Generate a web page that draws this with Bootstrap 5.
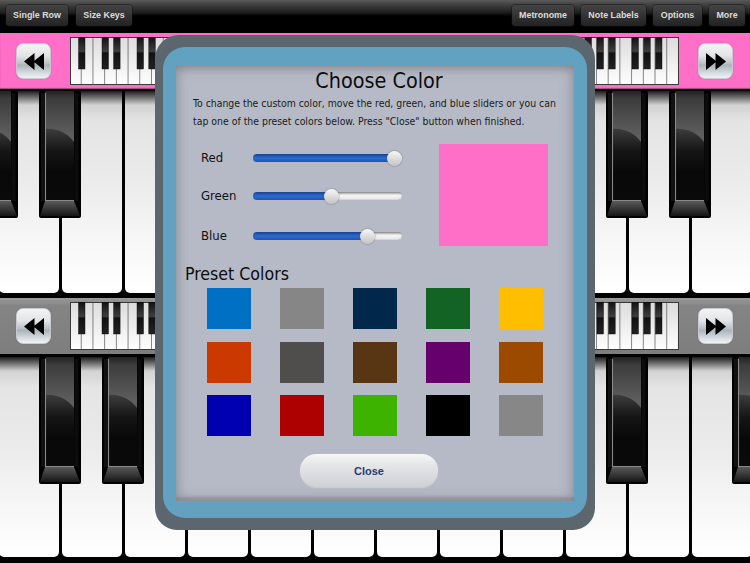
<!DOCTYPE html>
<html lang="en">
<head>
<meta charset="utf-8">
<title>Choose Color</title>
<link href="https://cdn.jsdelivr.net/npm/bootstrap@5.3.0/dist/css/bootstrap.min.css" rel="stylesheet">
<style>
html,body{margin:0;background:#000;}
.stage{width:750px;height:563px;overflow:hidden;background:#000;}
.topbar{height:31px;margin-bottom:2px;padding:0 5px 0 6px;background:linear-gradient(#5a5a5a 0,#3a3a3a 6px,#1c1c1c 13px,#000 16px,#000 100%);}
.tbar-r{gap:7px;}
.tbar-l{gap:8px;}
.tbtn{height:21px;padding:0;border:0;border-radius:3px;font:700 8.9px/21px "Liberation Sans",sans-serif;color:#dcdcdc;background:linear-gradient(#444 0,#333 50%,#222 100%);box-shadow:0 0 0 .5px #111;white-space:nowrap;}
.tbtn:hover{color:#dcdcdc;background:#333;}
.w-a{width:62px}.w-b{width:56px}.w-c{width:62px}.w-d{width:65px}.w-e{width:49px}.w-f{width:36px}
.band{height:56px;padding:0 18px 0 16px;gap:19px;}
.band-pink{background:#ff6ec7;margin-bottom:2px;box-shadow:inset 0 -1px 1px #a04a80;}
.band-grey{background:linear-gradient(#9a9a9a 0,#848484 8px,#7e7e7e 100%);margin-bottom:3px;}
.glass{width:35px;height:36px;flex:none;border-radius:7px;padding:0;border:1px solid #c9c9d2;background:linear-gradient(#f4f4f4 0,#e2e4e6 35%,#b8c0c6 58%,#a9b3ba 62%,#d5dbdf 85%,#f1f3f4 100%);box-shadow:0 0 1px rgba(0,0,0,.3);}
.glass svg{display:block;margin:auto;}
.mini{display:block;flex:none;}
.keys{margin-left:-64.5px;gap:3px;width:900px;}
.k-top{height:202px;margin-bottom:5px;}
.k-bot{height:200px;margin-bottom:6px;}
.wkey{position:relative;width:60px;flex:none;border-radius:0 0 5px 5px;background:linear-gradient(#1e1e1e 0,#777 7px,#d2d2d2 14px,#e4e4e4 30px,#ebebeb 90px,#f5f5f5 140px,#fff 100%);}
.bkey{position:absolute;top:0;left:calc(100% - 19.5px);width:42px;height:127px;display:block;z-index:1;}
.shell{position:absolute;left:155px;top:35px;width:440px;height:495px;padding:12px 8px;background:#5c666f;border-radius:24px 24px 22px 22px;z-index:5;}
.tray{height:100%;padding:18px 13px;background:#62a1c0;border-radius:22px;}
.sheet{height:100%;background:#b6bac6;box-shadow:inset 0 0 13px rgba(110,110,120,.7),inset 0 6px 7px -5px rgba(110,110,110,.4),inset 0 -10px 2px -6px rgba(140,140,140,.5);color:#111;font-family:"DejaVu Sans Condensed","DejaVu Sans",sans-serif;font-stretch:condensed;}
.ttl{height:30px;margin:1px 0 0 0;padding-left:8px;font-family:inherit;font-stretch:condensed;font-weight:400;font-size:21.4px;line-height:30px;text-align:center;color:#0c0c0c;}
.intro{margin:-1px 0 0 0;padding-left:17px;font-size:10.4px;line-height:17.5px;color:#1a1a1a;white-space:nowrap;}
.tune{margin-top:9px;padding-left:25px;gap:37px;}
.srow{height:38px;}
.srow-low{margin-top:2px;}
.slabel{width:52px;font-size:13px;color:#111;}
.sl{width:149px;height:16px;padding:0;background:transparent;}
.sl::-webkit-slider-runnable-track{height:8px;border-radius:4px;background:linear-gradient(#163f94,#2f6ad0 50%,#1c54b8) no-repeat,linear-gradient(#8f8f8f,#f5f5f5 40%,#e4e4e4);background-size:var(--p) 100%,100% 100%;box-shadow:inset 0 0 1px #555;}
.sl::-webkit-slider-thumb{-webkit-appearance:none;appearance:none;width:15px;height:15px;margin-top:-3.5px;border-radius:50%;border:0;background:linear-gradient(#f7f7f7,#c4c4c4);box-shadow:0 0 1.5px #555;}
.tint{width:109px;height:102px;margin-top:5px;background:#ff6ec7;flex:none;}
.sub{margin:8px 0 0 9px;height:22px;font-family:inherit;font-stretch:condensed;font-weight:400;font-size:17.6px;line-height:22px;color:#0c0c0c;}
.swatches{display:grid;grid-template-columns:repeat(5,44px);grid-auto-rows:41px;column-gap:29.1px;row-gap:12.5px;margin:3px 0 0 31px;}
.swt{display:block;}
.pill{display:block;width:138px;height:33px;margin:18px 0 0 124px;border:0;border-radius:16px;padding:1px 0 0;font:700 11px/33px "Liberation Sans",sans-serif;color:#2a3a70;background:linear-gradient(#f6f6f6 0,#e4e5e7 35%,#cfd1d5 100%);box-shadow:0 1px 1px rgba(255,255,255,.3);}
</style>
</head>
<body>
<svg width="0" height="0" class="position-absolute">
  <defs>
    <linearGradient id="face" x1="0" y1="0" x2="0" y2="1"><stop offset="0" stop-color="#222"/><stop offset=".07" stop-color="#3c3c3c"/><stop offset=".4" stop-color="#5e5e5e"/></linearGradient>
    <linearGradient id="gloss" x1="0" y1="0" x2="0" y2="1"><stop offset="0" stop-color="#3c3c3c"/><stop offset=".3" stop-color="#161616"/><stop offset=".6" stop-color="#080808"/><stop offset="1" stop-color="#0a0a0a"/></linearGradient>
    <linearGradient id="bev" x1="0" y1="0" x2="0" y2="1"><stop offset="0" stop-color="#5a5a5a"/><stop offset="1" stop-color="#151515"/></linearGradient>
    <linearGradient id="mw" x1="0" y1="0" x2="0" y2="1"><stop offset="0" stop-color="#dcdcdc"/><stop offset=".55" stop-color="#efefef"/><stop offset="1" stop-color="#fff"/></linearGradient>
    <linearGradient id="mb" x1="0" y1="0" x2="0" y2="1"><stop offset="0" stop-color="#111"/><stop offset=".45" stop-color="#3e3e3e"/><stop offset=".5" stop-color="#111"/><stop offset="1" stop-color="#222"/></linearGradient>
    <pattern id="mkeys" x="0" y="0" width="11.71" height="48" patternUnits="userSpaceOnUse"><rect width="11.71" height="48" fill="url(#mw)"/><rect x="11.1" width="1" height="48" fill="#3a3a3a"/></pattern>
    <symbol id="blk" viewBox="0 0 42 127">
      <rect width="42" height="127" rx="2" fill="#000"/>
      <rect x="6" y="0" width="29" height="110" fill="url(#face)"/>
      <path d="M6 38C18 37 28 42 35 51V110H6Z" fill="url(#gloss)"/>
      <path d="M6 110H35L41 125H1Z" fill="url(#bev)"/>
      <path d="M6.5 2V109.5H35" fill="none" stroke="#8a8a8a" stroke-width="1.1"/>
      <rect x="2" y="2" width="4" height="108" fill="#111"/>
      <rect x="35.5" y="2" width="4" height="108" fill="#0c0c0c"/>
    </symbol>
    <symbol id="mini" viewBox="0 0 609 48">
      <rect width="609" height="48" fill="url(#mkeys)"/>
      <rect x=".5" y=".5" width="608" height="47" fill="none" stroke="#3a3a3a"/>
      <g fill="url(#mb)" stroke="#000" stroke-width=".4">
        <rect x="8.5" y="0" width="6.5" height="32"/><rect x="32" y="0" width="6.5" height="32"/><rect x="43.6" y="0" width="6.5" height="32"/><rect x="67" y="0" width="6.5" height="32"/><rect x="78.8" y="0" width="6.5" height="32"/>
        <rect x="515" y="0" width="6.5" height="32"/><rect x="527" y="0" width="6.5" height="32"/><rect x="538.7" y="0" width="6.5" height="32"/><rect x="562" y="0" width="6.5" height="32"/><rect x="573.8" y="0" width="6.5" height="32"/><rect x="585.5" y="0" width="6.5" height="32"/>
      </g>
    </symbol>
  </defs>
</svg>

<div class="stage position-relative">
  <div class="topbar d-flex align-items-center justify-content-between">
    <div class="d-flex tbar-l">
      <button class="btn tbtn w-a" type="button">Single Row</button>
      <button class="btn tbtn w-b" type="button">Size Keys</button>
    </div>
    <div class="d-flex tbar-r">
      <button class="btn tbtn w-c" type="button">Metronome</button>
      <button class="btn tbtn w-d" type="button">Note Labels</button>
      <button class="btn tbtn w-e" type="button">Options</button>
      <button class="btn tbtn w-f" type="button">More</button>
    </div>
  </div>

  <div class="band band-pink d-flex align-items-center">
    <button class="btn glass" type="button" aria-label="Back"><svg width="20" height="17" viewBox="0 0 20 17"><path d="M10.5 0V17L0 8.5ZM20 0V17L9.5 8.5Z" fill="#000"/></svg></button>
    <svg class="mini" width="609" height="48"><use href="#mini"/></svg>
    <button class="btn glass" type="button" aria-label="Forward"><svg width="20" height="17" viewBox="0 0 20 17"><path d="M0 0V17L10.5 8.5ZM9.5 0V17L20 8.5Z" fill="#000"/></svg></button>
  </div>

  <div class="keys k-top d-flex">
    <div class="wkey"><svg class="bkey"><use href="#blk"/></svg></div>
    <div class="wkey"><svg class="bkey"><use href="#blk"/></svg></div>
    <div class="wkey"></div><div class="wkey"></div><div class="wkey"></div><div class="wkey"></div><div class="wkey"></div><div class="wkey"></div><div class="wkey"></div><div class="wkey"></div>
    <div class="wkey"><svg class="bkey"><use href="#blk"/></svg></div>
    <div class="wkey"><svg class="bkey"><use href="#blk"/></svg></div>
    <div class="wkey"></div><div class="wkey"></div>
  </div>

  <div class="band band-grey d-flex align-items-center">
    <button class="btn glass" type="button" aria-label="Back"><svg width="20" height="17" viewBox="0 0 20 17"><path d="M10.5 0V17L0 8.5ZM20 0V17L9.5 8.5Z" fill="#000"/></svg></button>
    <svg class="mini" width="609" height="48"><use href="#mini"/></svg>
    <button class="btn glass" type="button" aria-label="Forward"><svg width="20" height="17" viewBox="0 0 20 17"><path d="M0 0V17L10.5 8.5ZM9.5 0V17L20 8.5Z" fill="#000"/></svg></button>
  </div>

  <div class="keys k-bot d-flex">
    <div class="wkey"></div>
    <div class="wkey"><svg class="bkey"><use href="#blk"/></svg></div>
    <div class="wkey"><svg class="bkey"><use href="#blk"/></svg></div>
    <div class="wkey"></div><div class="wkey"></div><div class="wkey"></div><div class="wkey"></div><div class="wkey"></div><div class="wkey"></div><div class="wkey"></div>
    <div class="wkey"><svg class="bkey"><use href="#blk"/></svg></div>
    <div class="wkey"></div>
    <div class="wkey"><svg class="bkey"><use href="#blk"/></svg></div>
    <div class="wkey"></div>
  </div>

  <div class="shell">
    <div class="tray">
      <div class="sheet">
        <h1 class="ttl">Choose Color</h1>
        <p class="intro">To change the custom color, move the red, green, and blue sliders or you can<br>tap one of the preset colors below. Press "Close" button when finished.</p>
        <div class="tune d-flex">
          <div>
            <div class="srow d-flex align-items-center"><label class="slabel">Red</label><input class="form-range sl" type="range" min="0" max="100" value="100" style="--p:142px" aria-label="Red"></div>
            <div class="srow d-flex align-items-center"><label class="slabel">Green</label><input class="form-range sl" type="range" min="0" max="100" value="53" style="--p:79px" aria-label="Green"></div>
            <div class="srow srow-low d-flex align-items-center"><label class="slabel">Blue</label><input class="form-range sl" type="range" min="0" max="100" value="80" style="--p:115px" aria-label="Blue"></div>
          </div>
          <div class="tint"></div>
        </div>
        <h2 class="sub">Preset Colors</h2>
        <div class="swatches">
          <span class="swt" style="background:#0070c5"></span>
          <span class="swt" style="background:#868686"></span>
          <span class="swt" style="background:#01274a"></span>
          <span class="swt" style="background:#136324"></span>
          <span class="swt" style="background:#ffbf00"></span>
          <span class="swt" style="background:#cc3900"></span>
          <span class="swt" style="background:#504e4d"></span>
          <span class="swt" style="background:#593613"></span>
          <span class="swt" style="background:#66006c"></span>
          <span class="swt" style="background:#9c4a00"></span>
          <span class="swt" style="background:#0000b0"></span>
          <span class="swt" style="background:#ad0000"></span>
          <span class="swt" style="background:#3db300"></span>
          <span class="swt" style="background:#000"></span>
          <span class="swt" style="background:#878787"></span>
        </div>
        <button class="btn pill" type="button">Close</button>
      </div>
    </div>
  </div>
</div>
<script src="https://cdn.jsdelivr.net/npm/bootstrap@5.3.0/dist/js/bootstrap.bundle.min.js"></script>
</body>
</html>
